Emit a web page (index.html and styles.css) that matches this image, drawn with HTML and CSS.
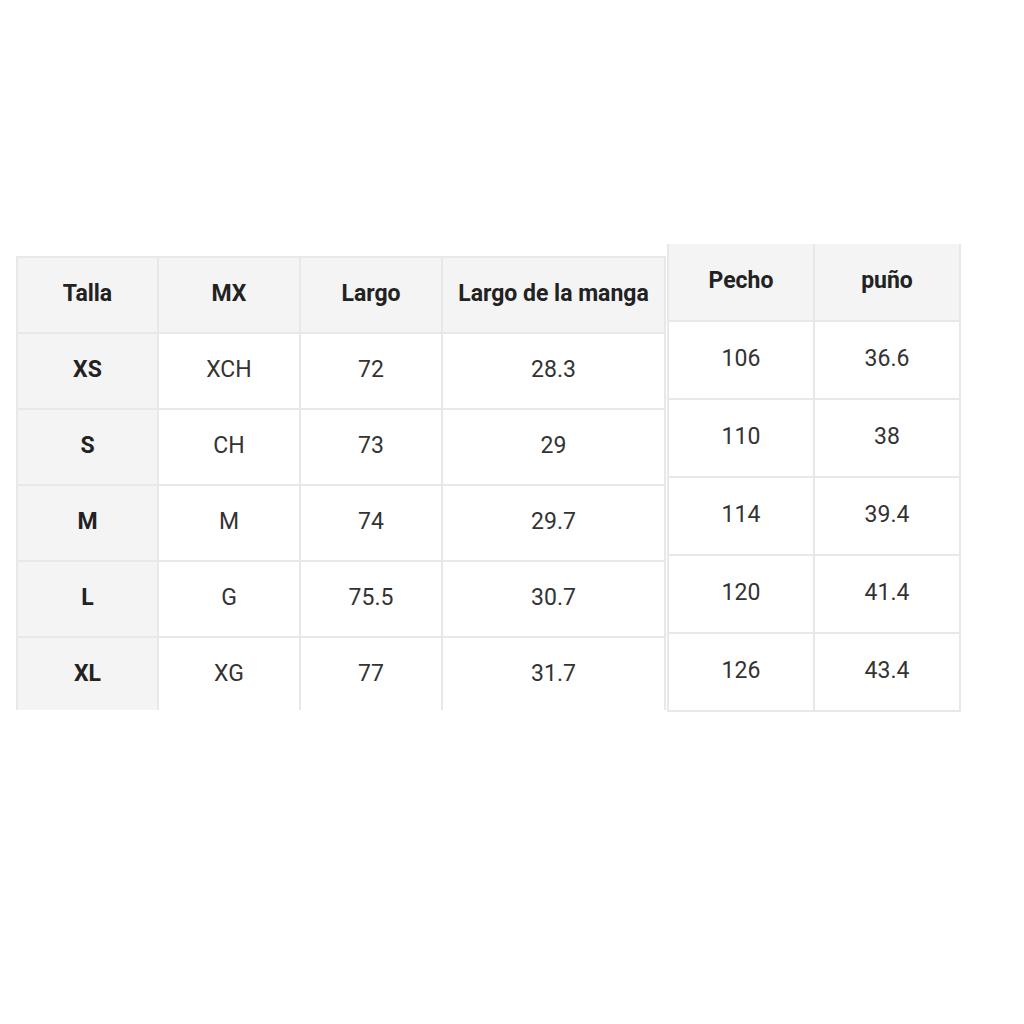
FILE: index.html
```html
<!DOCTYPE html>
<html lang="es">
<head>
<meta charset="utf-8">
<title>Tabla de tallas</title>
<link rel="stylesheet" href="styles.css">
</head>
<body>
<div class="page">
  <div class="grid grid-left">
    <div class="cell head">Talla</div>
    <div class="cell head">MX</div>
    <div class="cell head">Largo</div>
    <div class="cell head">Largo de la manga</div>

    <div class="cell side">XS</div>
    <div class="cell">XCH</div>
    <div class="cell">72</div>
    <div class="cell">28.3</div>

    <div class="cell side">S</div>
    <div class="cell">CH</div>
    <div class="cell">73</div>
    <div class="cell">29</div>

    <div class="cell side">M</div>
    <div class="cell">M</div>
    <div class="cell">74</div>
    <div class="cell">29.7</div>

    <div class="cell side">L</div>
    <div class="cell">G</div>
    <div class="cell">75.5</div>
    <div class="cell">30.7</div>

    <div class="cell side">XL</div>
    <div class="cell">XG</div>
    <div class="cell">77</div>
    <div class="cell">31.7</div>
  </div>

  <div class="grid grid-right">
    <div class="cell head">Pecho</div>
    <div class="cell head">puño</div>

    <div class="cell">106</div>
    <div class="cell">36.6</div>

    <div class="cell">110</div>
    <div class="cell">38</div>

    <div class="cell">114</div>
    <div class="cell">39.4</div>

    <div class="cell">120</div>
    <div class="cell">41.4</div>

    <div class="cell">126</div>
    <div class="cell">43.4</div>
  </div>
</div>
</body>
</html>
```
FILE: styles.css
```css
html, body {
  margin: 0;
  padding: 0;
  background: #ffffff;
}

body {
  font-family: Roboto, "Liberation Sans", sans-serif;
  color: #2b2b2b;
}

.page {
  display: flex;
  align-items: flex-start;
  padding-left: 16px;
  width: 1024px;
  height: 1024px;
  box-sizing: border-box;
}

.grid {
  display: grid;
  gap: 2px;
  background: #e8e8e8;
  overflow: hidden;
}

.grid-left {
  margin-top: 256px;
  padding: 2px 2px 0 2px;
  grid-template-columns: 139px 140px 140px 221px;
  grid-auto-rows: 74px;
  height: 454px;
  box-sizing: border-box;
}

.grid-right {
  margin-top: 244px;
  margin-left: 1px;
  padding: 0 2px 2px 2px;
  grid-template-columns: 144px 144px;
  grid-auto-rows: 76px;
}

.cell {
  display: flex;
  align-items: center;
  justify-content: center;
  box-sizing: border-box;
  padding-bottom: 3px;
  background: #ffffff;
  font-size: 23px;
  font-weight: 400;
  color: #333333;
  white-space: nowrap;
}

.head,
.side {
  background: #f4f4f4;
  font-weight: 700;
  color: #222222;
}
```
